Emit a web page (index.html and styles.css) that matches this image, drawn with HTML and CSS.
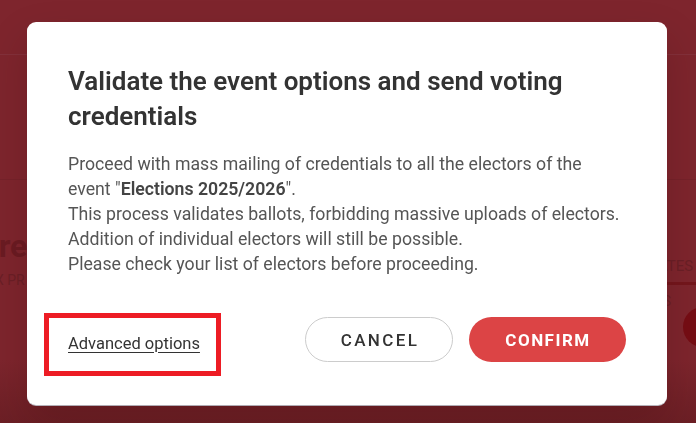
FILE: index.html
```html
<!DOCTYPE html>
<html lang="en">
<head>
<meta charset="utf-8">
<title>Validate event</title>
<link rel="stylesheet" href="styles.css">
</head>
<body>
<div class="page">
  <div class="band band-top"></div>
  <div class="band band-mid"></div>
  <div class="content">
    <div class="left-col">
      <div class="heading">Pres</div>
      <div class="sub">TAX PR</div>
    </div>
    <div class="right-col">
      <div class="tab">DATES (</div>
      <div class="tab-line"></div>
      <div class="right-row">
        <span class="small">S</span>
        <span class="dot"></span>
      </div>
    </div>
  </div>
</div>

<div class="backdrop">
  <div class="modal" role="dialog" aria-labelledby="mtitle">
    <h2 class="modal-title" id="mtitle">Validate the event options and send voting credentials</h2>
    <div class="modal-body">
      <p>Proceed with mass mailing of credentials to all the electors of the<br>event "<strong>Elections 2025/2026</strong>".</p>
      <p>This process validates ballots, forbidding massive uploads of electors.</p>
      <p>Addition of individual electors will still be possible.</p>
      <p>Please check your list of electors before proceeding.</p>
    </div>
    <div class="modal-footer">
      <div class="highlight"><a href="#" class="adv-link">Advanced options</a></div>
      <div class="actions">
        <button class="btn btn-cancel">CANCEL</button>
        <button class="btn btn-confirm">CONFIRM</button>
      </div>
    </div>
  </div>
</div>
</body>
</html>
```

FILE: styles.css
```css
* { box-sizing: border-box; }
html, body {
  margin: 0;
  padding: 0;
  width: 696px;
  height: 423px;
  overflow: hidden;
}
body {
  font-family: "Roboto", "Liberation Sans", sans-serif;
  background: #7e252d;
}
.page {
  width: 696px;
  height: 423px;
  background: linear-gradient(to bottom, #7e252d 0%, #7e252d 85%, #6c1f25 100%);
  overflow: hidden;
}
.band { width: 100%; }
.band-top { height: 55px; border-bottom: 1px solid #83303a; }
.band-mid { height: 125px; border-bottom: 1px solid #76222a; }
.content {
  display: flex;
  justify-content: space-between;
  padding-top: 50px;
}
.left-col { margin-left: -22px; }
.heading {
  font-size: 32px;
  font-weight: 700;
  color: #6b1b22;
  line-height: 32px;
}
.sub {
  font-size: 14px;
  color: #6b1f26;
  margin-top: 10px;
}
.right-col {
  width: 70px;
  padding-top: 27px;
}
.tab {
  font-size: 15px;
  color: #6b1f26;
  white-space: nowrap;
  text-align: right;
  margin-right: -6px;
}
.tab-line { height: 3px; background: #74161c; margin-top: 7px; margin-left: 14px; }
.right-row {
  display: flex;
  justify-content: flex-end;
  align-items: flex-start;
  gap: 12px;
  margin-top: 8px;
  margin-right: -27px;
}
.small { font-size: 14px; color: #6b1f26; }
.dot {
  width: 40px; height: 40px; border-radius: 50%;
  background: #760d14; margin-top: 14px;
}

.backdrop {
  position: fixed;
  inset: 0;
  display: flex;
  justify-content: center;
  align-items: flex-start;
  padding-top: 22px;
}
.modal {
  width: 640px;
  height: 383px;
  background: #ffffff;
  border-radius: 9px;
  padding: 42px 41px 0 41px;
  margin-left: -2px;
  box-shadow: 0 18px 40px rgba(40, 0, 5, 0.18), 0 1px 0 #c9c9d2;
  display: flex;
  flex-direction: column;
}
.modal-title {
  margin: 0;
  font-size: 26px;
  font-weight: 600;
  line-height: 35px;
  color: #333333;
}
.modal-body {
  margin-top: 18px;
  font-size: 17.7px;
  line-height: 25px;
  color: #555555;
}
.modal-body p { margin: 0; white-space: nowrap; }
.modal-body strong { font-weight: 600; color: #444; }
.modal-footer {
  margin-top: 36px;
  display: flex;
  justify-content: space-between;
  align-items: center;
  margin-left: -24px;
}
.highlight {
  border: 5px solid #ed1c24;
  padding: 16px 19px 19px 19px;
  width: 177px;
  height: 63px;
  display: flex;
  align-items: center;
}
.adv-link {
  font-size: 16.5px;
  color: #333333;
  text-decoration: underline;
  text-underline-offset: 3px;
  white-space: nowrap;
}
.actions {
  display: flex;
  gap: 16px;
  margin-top: -10px;
}
.btn {
  height: 45px;
  border-radius: 23px;
  font-family: inherit;
  font-size: 17px;
  cursor: pointer;
  padding: 0;
}
.btn-cancel {
  width: 148px;
  background: #fff;
  border: 1px solid #cccccc;
  color: #333;
  font-weight: 500;
  letter-spacing: 2.4px;
  text-indent: 2px;
}
.btn-confirm {
  width: 157px;
  background: #dc4445;
  border: none;
  color: #fff;
  font-weight: 700;
  letter-spacing: 1.5px;
  text-indent: 1px;
}
```
